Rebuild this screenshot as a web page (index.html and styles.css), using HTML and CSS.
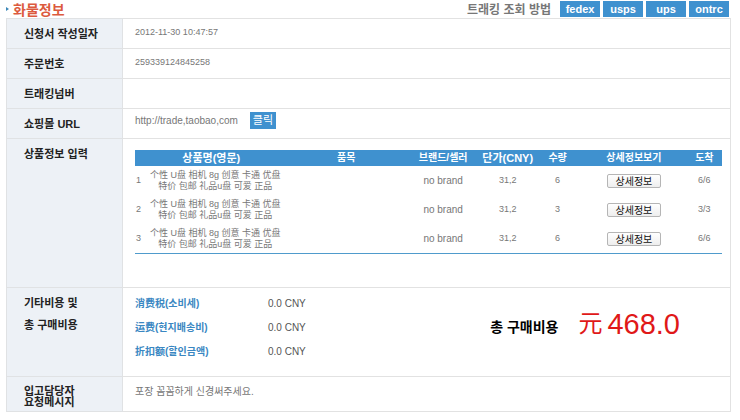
FILE: index.html
```
<!DOCTYPE html>
<html lang="ko">
<head>
    <meta charset="UTF-8" />
    <meta name="viewport" content="width=device-width, initial-scale=1" />
    <title>화물정보</title>
    <link rel="stylesheet" href="styles.css">
</head>
<body>
<div class="container">
    <div class="topbar">
        <h2>화물정보</h2>
        <div class="tracking">
            <span class="tracking-label">트래킹 조회 방법</span>
            <a class="carrier" href="#">fedex</a>
            <a class="carrier" href="#">usps</a>
            <a class="carrier" href="#">ups</a>
            <a class="carrier" href="#">ontrc</a>
        </div>
    </div>

    <table class="info">
        <tr>
            <th scope="row">신청서 작성일자</th>
            <td>2012-11-30 10:47:57</td>
        </tr>
        <tr>
            <th scope="row">주문번호</th>
            <td>259339124845258</td>
        </tr>
        <tr>
            <th scope="row">트래킹넘버</th>
            <td></td>
        </tr>
        <tr>
            <th scope="row">쇼핑몰 URL</th>
            <td class="url-cell">
                <div class="url-row">
                    <span>http://trade,taobao,com</span>
                    <a class="go" href="#">클릭</a>
                </div>
            </td>
        </tr>
        <tr>
            <th scope="row">상품정보 입력</th>
            <td class="items-cell">
                <table class="items">
                    <colgroup>
                        <col class="c-no"><col class="c-name"><col class="c-item"><col class="c-brand">
                        <col class="c-price"><col class="c-qty"><col class="c-detail"><col class="c-arrive">
                    </colgroup>
                    <thead>
                        <tr>
                            <th class="big" colspan="2">상품명(영문)</th>
                            <th>품목</th>
                            <th>브랜드/셀러</th>
                            <th class="big">단가(CNY)</th>
                            <th>수량</th>
                            <th>상세정보보기</th>
                            <th>도착</th>
                        </tr>
                    </thead>
                    <tbody>
                        <tr>
                            <td class="no">1</td>
                            <td class="name" lang="zh">个性 U盘 相机 8g 创意 卡通 优盘<br>特价 包邮 礼品u盘 可爱 正品</td>
                            <td></td>
                            <td class="brand">no brand</td>
                            <td>31,2</td>
                            <td>6</td>
                            <td><button type="button">상세정보</button></td>
                            <td>6/6</td>
                        </tr>
                        <tr>
                            <td class="no">2</td>
                            <td class="name" lang="zh">个性 U盘 相机 8g 创意 卡通 优盘<br>特价 包邮 礼品u盘 可爱 正品</td>
                            <td></td>
                            <td class="brand">no brand</td>
                            <td>31,2</td>
                            <td>3</td>
                            <td><button type="button">상세정보</button></td>
                            <td>3/3</td>
                        </tr>
                        <tr>
                            <td class="no">3</td>
                            <td class="name" lang="zh">个性 U盘 相机 8g 创意 卡通 优盘<br>特价 包邮 礼品u盘 可爱 正品</td>
                            <td></td>
                            <td class="brand">no brand</td>
                            <td>31,2</td>
                            <td>6</td>
                            <td><button type="button">상세정보</button></td>
                            <td>6/6</td>
                        </tr>
                    </tbody>
                </table>
            </td>
        </tr>
        <tr>
            <th class="cost-head" scope="row">기타비용 및<br>총 구매비용</th>
            <td class="cost-cell">
                <div class="cost-row">
                    <dl class="costs">
                        <dt>消费税(소비세)</dt><dd>0.0 CNY</dd>
                        <dt>运费(현지배송비)</dt><dd>0.0 CNY</dd>
                        <dt>折扣额(할인금액)</dt><dd>0.0 CNY</dd>
                    </dl>
                    <div class="total">
                        <span class="total-label">총 구매비용</span>
                        <span class="yuan">元</span>
                        <span class="amount">468.0</span>
                    </div>
                </div>
            </td>
        </tr>
        <tr>
            <th class="memo-head" scope="row">입고담당자<br>요청메시지</th>
            <td class="memo">포장 꼼꼼하게 신경써주세요.</td>
        </tr>
    </table>
</div>
</body>
</html>
```
FILE: styles.css
```
body {
  margin: 0;
  background: #fff;
  color: #777;
  font-family: "Liberation Sans", "Noto Sans CJK KR", sans-serif;
  font-size: 9px;
}
.container {
  padding: 0 9px 8px 6px;
}
a {
  text-decoration: none;
}

/* top bar */
.topbar {
  display: flex;
  justify-content: space-between;
  align-items: center;
  height: 18px;
  padding-right: 2px;
}
h2 {
  display: flex;
  align-items: center;
  gap: 4px;
  margin: 0;
  font-size: 14px;
  line-height: 18px;
  font-weight: bold;
  color: #dc5a3e;
  font-family: "Noto Sans CJK KR", sans-serif;
}
h2::before {
  content: "";
  border: 2px solid transparent;
  border-left: 3px solid #3a87b8;
  border-right: 0;
}
.tracking {
  display: flex;
  align-items: center;
  gap: 3px;
}
.tracking-label {
  margin-right: 6px;
  font-size: 12px;
  line-height: 16px;
  font-weight: bold;
  color: #777;
  font-family: "Noto Sans CJK KR", sans-serif;
}
.carrier {
  width: 40px;
  background: #3f91cf;
  color: #fff;
  font-size: 11px;
  font-weight: bold;
  line-height: 16px;
  text-align: center;
}

/* order info */
.info {
  width: 100%;
  border-collapse: collapse;
  table-layout: fixed;
  border: 1px solid #e2e2e2;
}
.info > tbody > tr > th {
  width: 98px;
  padding: 9px 0 8px 17px;
  background: #edf1f6;
  border: 1px solid #e0e2e4;
  color: #222;
  font-size: 11px;
  line-height: 12px;
  text-align: left;
  vertical-align: top;
}
.info > tbody > tr > td {
  padding: 7px 8px 10px 12px;
  border: 1px solid #e2e2e2;
  line-height: 12px;
  vertical-align: top;
}
.info > tbody > tr > .url-cell {
  padding-top: 3px;
  padding-bottom: 3px;
}
.url-row {
  display: flex;
  align-items: center;
  gap: 12px;
  font-size: 10px;
}
.go {
  padding: 0 3px;
  background: #3f91cf;
  color: #fff;
  font-size: 11px;
  line-height: 17px;
}

/* item list */
.info > tbody > tr > .items-cell {
  padding-top: 11px;
  padding-bottom: 33px;
}
.items {
  width: 100%;
  border-spacing: 0;
  table-layout: fixed;
  border-bottom: 1px solid #4f9bcc;
}
.c-no { width: 2%; }
.c-name { width: 24%; }
.c-item { width: 20%; }
.c-brand { width: 13%; }
.c-price { width: 9%; }
.c-qty { width: 8%; }
.c-detail { width: 18%; }
.c-arrive { width: 6%; }
.items th {
  padding: 0;
  background: #3f91cf;
  color: #fff;
  font-size: 10px;
  line-height: 16px;
  white-space: nowrap;
}
.items .big {
  font-size: 11px;
}
.items td {
  height: 29px;
  padding: 0;
  line-height: 11px;
  text-align: center;
}
.items .no {
  padding-left: 1px;
  text-align: left;
}
.items .name {
  padding-right: 4px;
  font-family: "Liberation Sans", "Noto Sans CJK SC", sans-serif;
  white-space: nowrap;
}
.items .brand {
  font-size: 10px;
}
button {
  display: block;
  width: 54px;
  height: 14px;
  margin: 0 auto;
  padding: 0;
  border: 1px solid #b5b5b5;
  border-radius: 2px;
  background: linear-gradient(#fff, #eee);
  color: #111;
  font-family: "Noto Sans CJK KR", sans-serif;
  font-size: 10px;
  line-height: 12px;
  cursor: pointer;
}

/* costs */
.info > tbody > tr > .cost-head {
  padding-top: 4px;
  line-height: 22px;
}
.info > tbody > tr > .cost-cell {
  padding-top: 4px;
  padding-bottom: 12px;
}
.cost-row {
  display: flex;
  justify-content: space-between;
  align-items: center;
  padding-right: 42px;
}
.costs {
  display: grid;
  grid-template-columns: 133px auto;
  margin: 0;
  font-size: 10px;
  line-height: 24px;
}
.costs dt {
  color: #3a87c2;
  font-weight: bold;
}
.costs dd {
  margin: 0;
  color: #555;
}
.total {
  display: flex;
  align-items: center;
  padding-bottom: 8px;
  line-height: 32px;
}
.total-label {
  margin-right: 20px;
  padding-top: 6px;
  color: #000;
  font-size: 14px;
  font-weight: bold;
}
.yuan {
  margin-right: 5px;
  color: #e01818;
  font-size: 24px;
}
.amount {
  color: #e01818;
  font-size: 29px;
}

/* memo */
.info > tbody > tr > .memo-head {
  padding-bottom: 3px;
  line-height: 11px;
}
.info > tbody > tr > .memo {
  font-size: 10px;
  padding-top: 9px;
}
```
